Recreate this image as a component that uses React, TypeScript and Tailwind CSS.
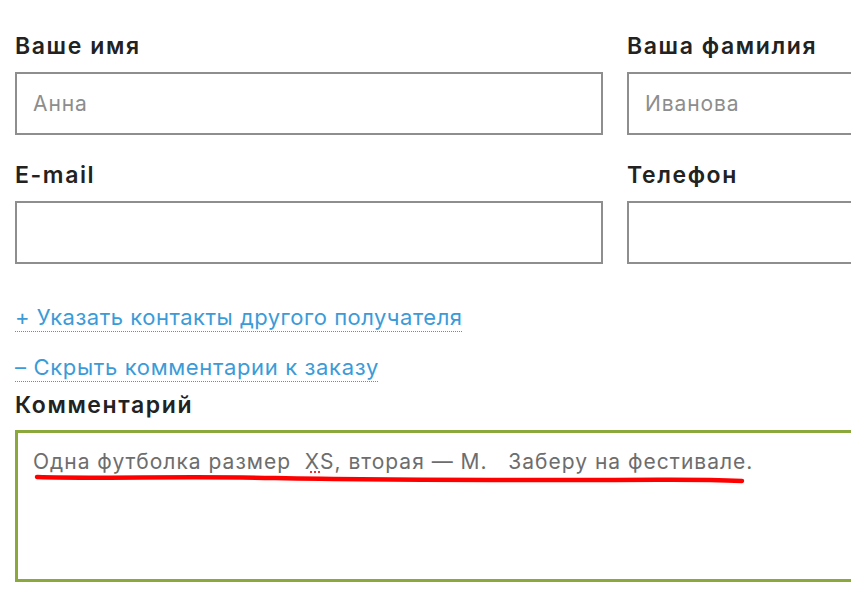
import React from "react";

const font = { fontFamily: "Inter, 'Open Sans', sans-serif" };

function Field({ label, placeholder }: { label: string; placeholder?: string }) {
  return (
    <div className="w-[588px] shrink-0">
      <div className="mb-[8px] text-[23px] font-semibold leading-[36px] tracking-[1.6px] text-[#222]">{label}</div>
      <div className="flex h-[63px] items-center border-2 border-[#8e8e8e] px-4 text-[21px] tracking-[0.9px] text-[#8d8d8d]">
        {placeholder}
      </div>
    </div>
  );
}

export default function App() {
  return (
    <div className="relative h-[602px] w-[851px] overflow-hidden bg-white pl-[15px] pt-[28px]" style={font}>
      <div className="flex gap-[24px]">
        <Field label="Ваше имя" placeholder="Анна" />
        <Field label="Ваша фамилия" placeholder="Иванова" />
      </div>
      <div className="mt-[22px] flex gap-[24px]">
        <Field label="E-mail" />
        <Field label="Телефон" />
      </div>

      <div className="mt-[35px] flex flex-col items-start gap-[14px] text-[22px] leading-[36px] tracking-[0.5px] text-[#3b9bd8]">
        <a className="underline decoration-dotted decoration-1 underline-offset-[6px]">+ Указать контакты другого получателя</a>
        <a className="tracking-[0.65px] underline decoration-dotted decoration-1 underline-offset-[6px]">– Скрыть комментарии к заказу</a>
      </div>

      <div className="mt-[2px] text-[23px] font-semibold leading-[36px] tracking-[1.6px] text-[#222]">Комментарий</div>

      <div className="relative mt-[7px] h-[152px] w-[900px] border-[3px] border-[#8aa83c] px-[15px] pt-[15px] text-[21px] leading-[28px] tracking-[1px] text-[#6d6d6d]">
        <span className="whitespace-pre">Одна футболка размер  XS, вторая — М.   Заберу на фестивале.</span>
        <svg className="absolute -left-[3px] -top-[3px]" width="851" height="100" viewBox="0 0 851 100">
          <path
            d="M22 47 C 90 49, 160 46, 260 48 S 440 50, 560 50 S 680 49, 727 51"
            stroke="#f00"
            strokeWidth="4.5"
            strokeLinecap="round"
            fill="none"
          />
          <path d="M295 42 h2 M299 42 h2 M303 42 h2" stroke="#e33" strokeWidth="2" />
        </svg>
      </div>
    </div>
  );
}
